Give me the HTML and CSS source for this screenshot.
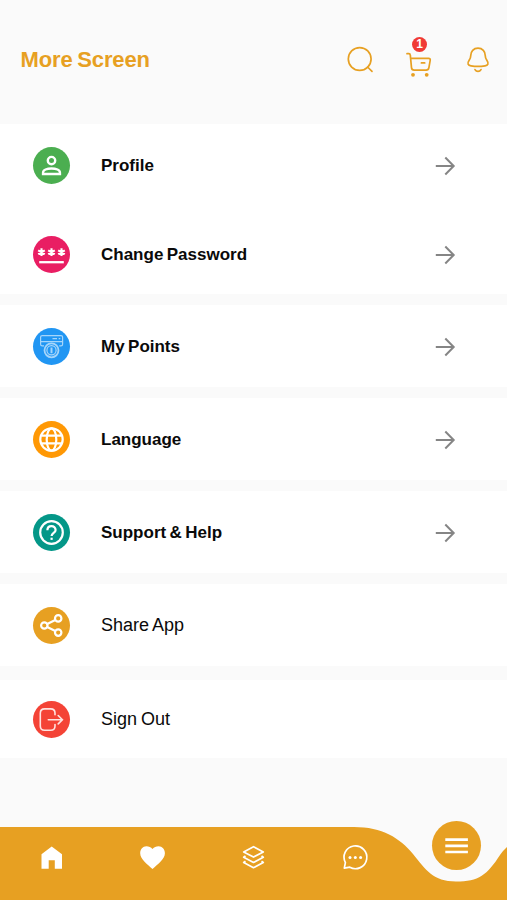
FILE: index.html
```html
<!DOCTYPE html>
<html lang="en">

<head>
    <meta charset="UTF-8">
    <title>More Screen</title>
    <meta name="viewport" content="width=device-width, initial-scale=1.0">
    <link rel="stylesheet" href="styles.css">
</head>

<body>

    <header class="top-bar">
        <h1>More Screen</h1>
        <div class="actions">
            <button aria-label="Search">
                <svg width="30" height="30" viewBox="0 0 30 30">
                    <circle cx="14.7" cy="14" r="11.4" />
                    <path d="M22.6 22L27 26.3" />
                </svg>
            </button>
            <button class="cart" aria-label="Cart">
                <svg width="30" height="30" viewBox="0 0 30 30">
                    <path d="M3 3.7H4.800Q6.200 3.700 6.300 5.200L7.500 17.600Q7.700 20.100 10.200 20.100H22.100Q24.500 20.100 24.900 17.600L26.200 10.400Q26.600 8.400 24.500 8.400H6.700" />
                    <path d="M17.400 12.900H20.700" />
                    <circle class="solid" cx="9" cy="24.800" r="1.900" />
                    <circle class="solid" cx="22.700" cy="24.800" r="1.900" />
                </svg>
                <span class="badge">1</span>
            </button>
            <button aria-label="Notifications">
                <svg width="30" height="30" viewBox="0 0 30 30">
                    <path d="M15 3.200C10.400 3.200 7.800 6.600 7.800 10.300C7.800 13.300 7.300 13.900 5.900 15.700C4 18.200 5 20.500 8 20.900C12.300 21.600 17.700 21.600 22 20.900C25 20.500 26 18.200 24.100 15.700C22.700 13.900 22.200 13.300 22.200 10.300C22.200 6.600 19.600 3.200 15 3.200Z" />
                    <path d="M12 24.600C13.400 27 16.600 27 18 24.600" />
                </svg>
            </button>
        </div>
    </header>

    <main class="menu">
        <section class="group">
            <a class="row" href="#">
                <span class="icon green">
                    <svg width="37" height="37" viewBox="0 0 37 37">
                        <circle cx="18.5" cy="13.6" r="3.7" stroke-width="2.4" />
                        <path d="M10 27V25.7C10 23 14 21.5 18.5 21.5S27 23 27 25.7V27Z" stroke-width="2.3" />
                    </svg>
                </span>
                <span class="label">Profile</span>
                <svg class="arrow" width="22" height="22" viewBox="0 0 22 22"><path d="M1.8 11H19.5M11.3 2.5L19.7 11L11.3 19.5" /></svg>
            </a>
            <a class="row" href="#">
                <span class="icon pink">
                    <svg width="37" height="37" viewBox="0 0 37 37">
                        <path d="M8.5 12.3V20.100M5.200 14.300L11.800 18.200M11.800 14.300L5.200 18.200M18.500 12.300V20.100M15.200 14.300L21.800 18.200M21.800 14.300L15.200 18.200M28.500 12.300V20.100M25.200 14.300L31.800 18.200M31.800 14.300L25.200 18.200" stroke-width="2.1" />
                        <path d="M6.2 26.2H30.8" stroke-width="2.3" />
                    </svg>
                </span>
                <span class="label">Change Password</span>
                <svg class="arrow" width="22" height="22" viewBox="0 0 22 22"><path d="M1.8 11H19.5M11.3 2.5L19.7 11L11.3 19.5" /></svg>
            </a>
        </section>

        <section class="group">
            <a class="row" href="#">
                <span class="icon blue">
                    <svg width="37" height="37" viewBox="0 0 37 37">
                        <path d="M11 17.800H9.200Q7.600 17.800 7.600 16.200V9.100Q7.600 7.600 9.200 7.600H28Q29.600 7.600 29.600 9.100V16.200Q29.600 17.800 28 17.800H26.200M8 13.600H29.200M19.500 10.700H24M25.700 10.700H27.300" />
                        <circle cx="18.5" cy="22.3" r="7" stroke-width="1.8" />
                        <circle cx="18.5" cy="22.3" r="4.6" />
                        <path d="M18.5 19.5V25.2" stroke-width="2" />
                    </svg>
                </span>
                <span class="label">My Points</span>
                <svg class="arrow" width="22" height="22" viewBox="0 0 22 22"><path d="M1.8 11H19.5M11.3 2.5L19.7 11L11.3 19.5" /></svg>
            </a>
        </section>

        <section class="group">
            <a class="row" href="#">
                <span class="icon orange">
                    <svg width="37" height="37" viewBox="0 0 37 37">
                        <circle cx="18.5" cy="18.5" r="11.2" />
                        <ellipse cx="18.5" cy="18.5" rx="4.800" ry="11.2" />
                        <path d="M8.2 14.6H28.8M8.2 22.4H28.8" />
                    </svg>
                </span>
                <span class="label">Language</span>
                <svg class="arrow" width="22" height="22" viewBox="0 0 22 22"><path d="M1.8 11H19.5M11.3 2.5L19.7 11L11.3 19.5" /></svg>
            </a>
        </section>

        <section class="group">
            <a class="row" href="#">
                <span class="icon teal">
                    <svg width="37" height="37" viewBox="0 0 37 37">
                        <circle cx="18.5" cy="18.5" r="11.3" />
                        <path d="M14.4 16.2C14.4 10.8 22.6 10.8 22.6 16C22.6 18.8 18.6 19 18.6 22" />
                        <path d="M18.6 23.7V25.9" />
                    </svg>
                </span>
                <span class="label">Support &amp; Help</span>
                <svg class="arrow" width="22" height="22" viewBox="0 0 22 22"><path d="M1.8 11H19.5M11.3 2.5L19.7 11L11.3 19.5" /></svg>
            </a>
        </section>

        <section class="group">
            <a class="row light" href="#">
                <span class="icon amber">
                    <svg width="37" height="37" viewBox="0 0 37 37">
                        <circle cx="11.3" cy="18.5" r="3.2" />
                        <circle cx="25.2" cy="11.4" r="3.2" />
                        <circle cx="25.2" cy="25.6" r="3.2" />
                        <path d="M14.2 17L22.3 12.9M14.2 20L22.3 24.1" />
                    </svg>
                </span>
                <span class="label">Share App</span>
            </a>
        </section>

        <section class="group last">
            <a class="row light" href="#">
                <span class="icon red">
                    <svg width="37" height="37" viewBox="0 0 37 37">
                        <path d="M22 13.7V12.2Q22 7.9 17.7 7.9H11.6Q7.3 7.9 7.3 12.2V25Q7.3 29.3 11.6 29.3H17.7Q22 29.3 22 25V23.6" />
                        <path d="M15.3 18.7H29M25.2 14.5L29.4 18.7L25.2 22.9" />
                    </svg>
                </span>
                <span class="label">Sign Out</span>
            </a>
        </section>
    </main>

    <nav class="bottom-nav">
        <!-- bar with the dip under the active button -->
        <svg class="nav-shape" width="507" height="80" viewBox="0 0 507 80">
            <path d="M0 7H354C382 7 400 18 413 34C426 50 433 61.5 456 61.5C479 61.5 487 55 500 35Q503.5 30 507 27V80H0Z" />
        </svg>
        <a href="#" aria-label="Home">
            <svg width="30" height="30" viewBox="0 0 30 30"><path class="solid" d="M15.7 4.6L26 12.3V26.700H18.800V18.300H12.700V26.700H5.500V12.300Z" /></svg>
        </a>
        <a href="#" aria-label="Favorites">
            <svg width="30" height="30" viewBox="0 0 30 30"><path class="solid" d="M15.5 27C10.200 22.100 3.200 17.200 3.200 11.200C3.200 7.200 5.800 4.300 9.400 4.300C11.900 4.300 13.900 5.200 15.500 7.100C17.100 5.200 19.100 4.300 21.600 4.300C25.200 4.300 27.900 7.200 27.900 11.200C27.900 17.200 20.800 22.100 15.500 27Z" /></svg>
        </a>
        <a href="#" aria-label="Orders">
            <svg width="30" height="30" viewBox="0 0 30 30">
                <path d="M15.5 4.7L25.300 9.900L15.500 15.100L5.700 9.900Z" />
                <path d="M7.500 14L5.700 15.300L15.500 20.500L25.300 15.300L23.500 14M7.500 19.200L5.700 20.500L15.500 25.700L25.300 20.500L23.500 19.200" />
            </svg>
        </a>
        <a href="#" aria-label="Messages">
            <svg width="30" height="30" viewBox="0 0 30 30">
                <path d="M4.300 26.100L5.400 20.700A11.400 11.400 0 1 1 9.800 25.200Z" />
                <circle class="solid" cx="10" cy="15.4" r="1.500" />
                <circle class="solid" cx="15.300" cy="15.400" r="1.500" />
                <circle class="solid" cx="20.600" cy="15.400" r="1.500" />
            </svg>
        </a>
        <a class="current" href="#" aria-label="More">
            <span class="more-button">
                <svg width="49" height="49" viewBox="0 0 49 49"><path d="M13.300 18.700H35.900M13.300 24.900H35.900M13.300 31H35.900" /></svg>
            </span>
        </a>
    </nav>

</body>

</html>
```
FILE: styles.css
```css
* {
    box-sizing: border-box;
}

body {
    font-family: "Liberation Sans", Arial, sans-serif;
    background-color: #fafafa;
    color: #0a0a0a;
    margin: 0;
    width: 507px;
    height: 900px;
    display: flex;
    flex-direction: column;
    overflow: hidden;
}

svg {
    display: block;
    fill: none;
}

.top-bar {
    height: 124px;
    padding: 0 14px 4px 20.5px;
    display: flex;
    align-items: center;
    justify-content: space-between;
    color: #e7a022;
}

.top-bar h1 {
    margin: 0;
    font-size: 22px;
    letter-spacing: -0.1px;
    word-spacing: -1.5px;
}

.actions {
    display: flex;
    gap: 29px;
}

.actions button {
    position: relative;
    padding: 0;
    border: none;
    background: none;
    cursor: pointer;
}

.actions .cart {
    margin: 5px 0 -5px;
}

.actions svg {
    stroke: #e7a022;
    stroke-width: 1.7;
    stroke-linecap: round;
    stroke-linejoin: round;
}

.actions .solid {
    fill: #e7a022;
    stroke: none;
}

.badge {
    position: absolute;
    top: -13px;
    left: 8px;
    width: 15px;
    height: 15px;
    border-radius: 50%;
    background-color: #f03a35;
    color: #fff;
    font-size: 12px;
    font-weight: bold;
    line-height: 15px;
    text-align: center;
}

.menu {
    flex: 1;
}

.group {
    background-color: #fff;
    margin-bottom: 11px;
    display: grid;
    gap: 8px;
}

.group.last {
    margin-top: 14px;
}

.row {
    height: 82px;
    padding: 1px 51px 0 32.5px;
    display: flex;
    align-items: center;
    color: inherit;
    font-size: 17px;
    font-weight: bold;
    word-spacing: -1.3px;
    text-decoration: none;
}

.row + .row {
    height: 80px;
}

.last .row {
    height: 78px;
}

.row.light {
    font-size: 18px;
    font-weight: normal;
    word-spacing: -1px;
}

.label {
    flex: 1;
    margin-left: 31.5px;
}

.icon {
    width: 37px;
    height: 37px;
    border-radius: 50%;
}

.icon svg {
    stroke: #fff;
    stroke-width: 2.2;
}

.green { background-color: #4bae50; }
.pink { background-color: #e91e63; }
.blue { background-color: #2196f3; }
.orange { background-color: #ff9804; }
.teal { background-color: #049788; }
.amber { background-color: #e7a022; }
.red { background-color: #f44336; }

.blue svg {
    stroke: #a6d5fa;
    stroke-width: 1.2;
}

.red svg {
    stroke: #ffe3e0;
    stroke-width: 1.6;
    stroke-linecap: round;
}

.arrow {
    stroke: #858585;
    stroke-width: 2;
}

.bottom-nav {
    position: relative;
    height: 80px;
    display: grid;
    grid-template-columns: repeat(5, 1fr);
}

.nav-shape {
    position: absolute;
    inset: 0;
    fill: #e7a022;
}

.bottom-nav a {
    position: relative;
    display: flex;
    justify-content: center;
    padding-top: 22px;
}

.bottom-nav a svg {
    stroke: #fff;
    stroke-width: 1.7;
    stroke-linejoin: round;
}

.bottom-nav .solid {
    fill: #fff;
    stroke: none;
}

.bottom-nav .current {
    padding-top: 0.5px;
}

.more-button {
    width: 49px;
    height: 49px;
    border-radius: 50%;
    background-color: #e7a022;
}

.bottom-nav .more-button svg {
    stroke-width: 2.7;
}
```
